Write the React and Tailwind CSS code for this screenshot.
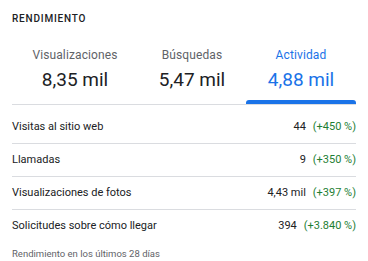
import React from "react";

const tabs = [
  { label: "Visualizaciones", value: "8,35 mil", w: "w-[126px]", active: false },
  { label: "Búsquedas", value: "5,47 mil", w: "w-[108px]", active: false },
  { label: "Actividad", value: "4,88 mil", w: "w-[110px]", active: true },
];

const rows = [
  { label: "Visitas al sitio web", value: "44", pct: "(+450 %)" },
  { label: "Llamadas", value: "9", pct: "(+350 %)" },
  { label: "Visualizaciones de fotos", value: "4,43 mil", pct: "(+397 %)" },
  { label: "Solicitudes sobre cómo llegar", value: "394", pct: "(+3.840 %)" },
];

export default function App() {
  return (
    <div
      className="w-[368px] h-[261px] bg-white px-[12px] overflow-hidden"
      style={{ fontFamily: "Roboto, 'Noto Sans', Arial, sans-serif" }}
    >
      <div className="pt-[12px] text-[10px] leading-[14px] font-medium tracking-[0.08em] text-[#202124]">
        RENDIMIENTO
      </div>
      <div className="flex border-b border-[#dadce0]">
        {tabs.map((t) => (
          <div key={t.label} className={`${t.w} flex flex-col items-center pt-[22px]`}>
            <div
              className={`text-[12px] leading-[14px] tracking-[0.01em] ${t.active ? "text-[#1a73e8]" : "text-[#5f6368]"}`}
            >
              {t.label}
            </div>
            <div
              className={`mt-[6px] text-[19px] leading-[24px] ${t.active ? "text-[#1a73e8]" : "text-[#202124]"}`}
            >
              {t.value}
            </div>
            <div
              className={`mt-[8px] h-[4px] w-full rounded-t-[3px] ${t.active ? "bg-[#1a73e8]" : "bg-transparent"}`}
            />
          </div>
        ))}
      </div>
      <div className="pt-[6px]">
        {rows.map((r, i) => (
          <div
            key={r.label}
            className={`flex items-center justify-between text-[11px] ${i < rows.length - 1 ? "h-[33px] border-b border-[#dadce0]" : "h-[32px]"}`}
          >
            <span className="text-[#202124]">{r.label}</span>
            <span className="flex gap-[7px]">
              <span className="text-[#202124]">{r.value}</span>
              <span className="text-[#1e7e34]">{r.pct}</span>
            </span>
          </div>
        ))}
      </div>
      <div className="mt-[5px] text-[9.5px] leading-[14px] text-[#5f6368]">
        Rendimiento en los últimos 28 días
      </div>
    </div>
  );
}
